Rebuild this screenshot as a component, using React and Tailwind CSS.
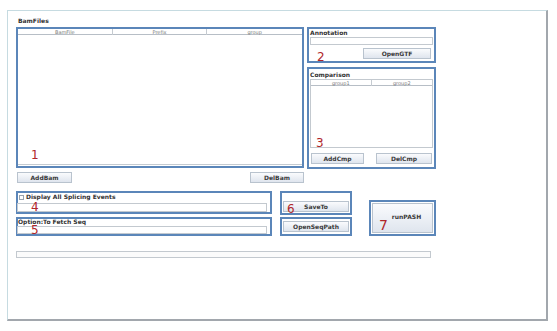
const font = { fontFamily: '"DejaVu Sans", "Liberation Sans", sans-serif' };

function Btn({ children, className = "" }) {
  return (
    <div className={`flex items-center justify-center border border-[#b9c3ce] bg-gradient-to-b from-[#fafbfd] to-[#dfe5ee] text-[6px] font-bold text-[#3a3a3a] ${className}`}>
      {children}
    </div>
  );
}

function Num({ children, className = "" }) {
  return <span className={`absolute text-[12px] leading-none text-[#b0262a] ${className}`}>{children}</span>;
}

function Field({ className = "" }) {
  return <div className={`border border-[#c3c9cf] bg-white ${className}`} />;
}

export default function App() {
  return (
    <div className="h-[331px] w-[557px] bg-white pl-[7px] pt-[10px]" style={font}>
      <div className="flex h-[311px] w-[541px] flex-col border-l border-t border-[#c6dbe1] border-r-2 border-b-2 border-r-[#a2a7ad] border-b-[#a2a7ad] bg-white pl-[8px] pt-[6px]">
        <div className="pl-[2px] text-[6px] font-bold leading-[8px] text-[#333]">BamFiles</div>

        <div className="mt-[2px] flex gap-[3px]">
          <div className="flex w-[288px] flex-col">
            <div className="relative h-[141px] border-2 border-[#5b86b9] bg-white">
              <div className="flex h-[136px] flex-col border-b border-[#c5cbd1]">
                <div className="grid h-[6px] grid-cols-3 border-b border-[#b7bec6] text-center text-[5px] leading-[6px] text-[#7c7c7c]">
                  <div className="border-r border-[#c5cbd1]">BamFile</div>
                  <div className="border-r border-[#c5cbd1]">Prefix</div>
                  <div>group</div>
                </div>
              </div>
              <Num className="left-[13px] top-[120px]">1</Num>
            </div>
            <div className="mt-[4px] flex justify-between pl-[1px]">
              <Btn className="h-[11px] w-[55px]">AddBam</Btn>
              <Btn className="h-[11px] w-[54px]">DelBam</Btn>
            </div>
          </div>

          <div className="flex w-[129px] flex-col gap-[4px]">
            <div className="relative h-[36px] border-2 border-[#5b86b9] px-[1px]">
              <div className="text-[6px] font-bold leading-[7px] text-[#333]">Annotation</div>
              <Field className="mt-[1px] h-[8px]" />
              <div className="mt-[3px] flex justify-end pr-[2px]">
                <Btn className="h-[11px] w-[68px]">OpenGTF</Btn>
              </div>
              <Num className="left-[8px] top-[22px]">2</Num>
            </div>
            <div className="relative h-[102px] border-2 border-[#5b86b9] px-[1px]">
              <div className="mt-[2px] text-[6px] font-bold leading-[7px] text-[#333]">Comparison</div>
              <div className="mt-[1px] h-[69px] border border-[#c3c9cf] bg-white">
                <div className="grid h-[6px] grid-cols-2 border-b border-[#b7bec6] text-center text-[5px] leading-[6px] text-[#7c7c7c]">
                  <div className="border-r border-[#c5cbd1]">group1</div>
                  <div>group2</div>
                </div>
              </div>
              <div className="mt-[5px] flex justify-between px-[1px]">
                <Btn className="h-[11px] w-[53px]">AddCmp</Btn>
                <Btn className="h-[11px] w-[56px]">DelCmp</Btn>
              </div>
              <Num className="left-[7px] top-[68px]">3</Num>
            </div>
          </div>
        </div>

        <div className="mt-[8px] flex items-start">
          <div className="flex w-[256px] flex-col gap-[3px]">
            <div className="relative h-[23px] border-2 border-[#5b86b9]">
              <div className="flex items-center gap-[2px] pl-[1px] text-[6px] font-bold leading-[8px] text-[#333]">
                <span className="inline-block h-[5px] w-[5px] border border-[#9aa3ad] bg-white" />
                Display All Splicing Events
              </div>
              <Field className="ml-[-1px] mr-[3px] mt-[2px] h-[9px]" />
              <Num className="left-[13px] top-[8px]">4</Num>
            </div>
            <div className="relative h-[19px] border-2 border-[#5b86b9]">
              <div className="text-[6px] font-bold leading-[6px] text-[#333]">Option:To Fetch Seq</div>
              <Field className="ml-[-1px] mr-[3px] mt-[1px] h-[8px]" />
              <Num className="left-[13px] top-[5px]">5</Num>
            </div>
          </div>

          <div className="ml-[8px] flex w-[72px] flex-col gap-[2px]">
            <div className="relative flex h-[24px] flex-col justify-end border-2 border-[#5b86b9] pb-[1px] pl-[1px]">
              <Btn className="h-[11px] w-[66px]">SaveTo</Btn>
              <Num className="left-[5px] top-[10px]">6</Num>
            </div>
            <div className="flex h-[19px] items-center border-2 border-[#5b86b9] pl-[1px]">
              <Btn className="h-[11px] w-[66px]">OpenSeqPath</Btn>
            </div>
          </div>

          <div className="relative ml-[17px] mt-[9px] h-[36px] w-[67px] border-2 border-[#5b86b9] p-[1px]">
            <Btn className="h-full w-full pl-[8px] pb-[3px]">runPASH</Btn>
            <Num className="left-[8px] top-[16px] text-[14px]">7</Num>
          </div>
        </div>

        <div className="mt-[15px] h-[7px] w-[415px] border border-[#c3c9cf] bg-[#fbfbfb]" />
      </div>
    </div>
  );
}
